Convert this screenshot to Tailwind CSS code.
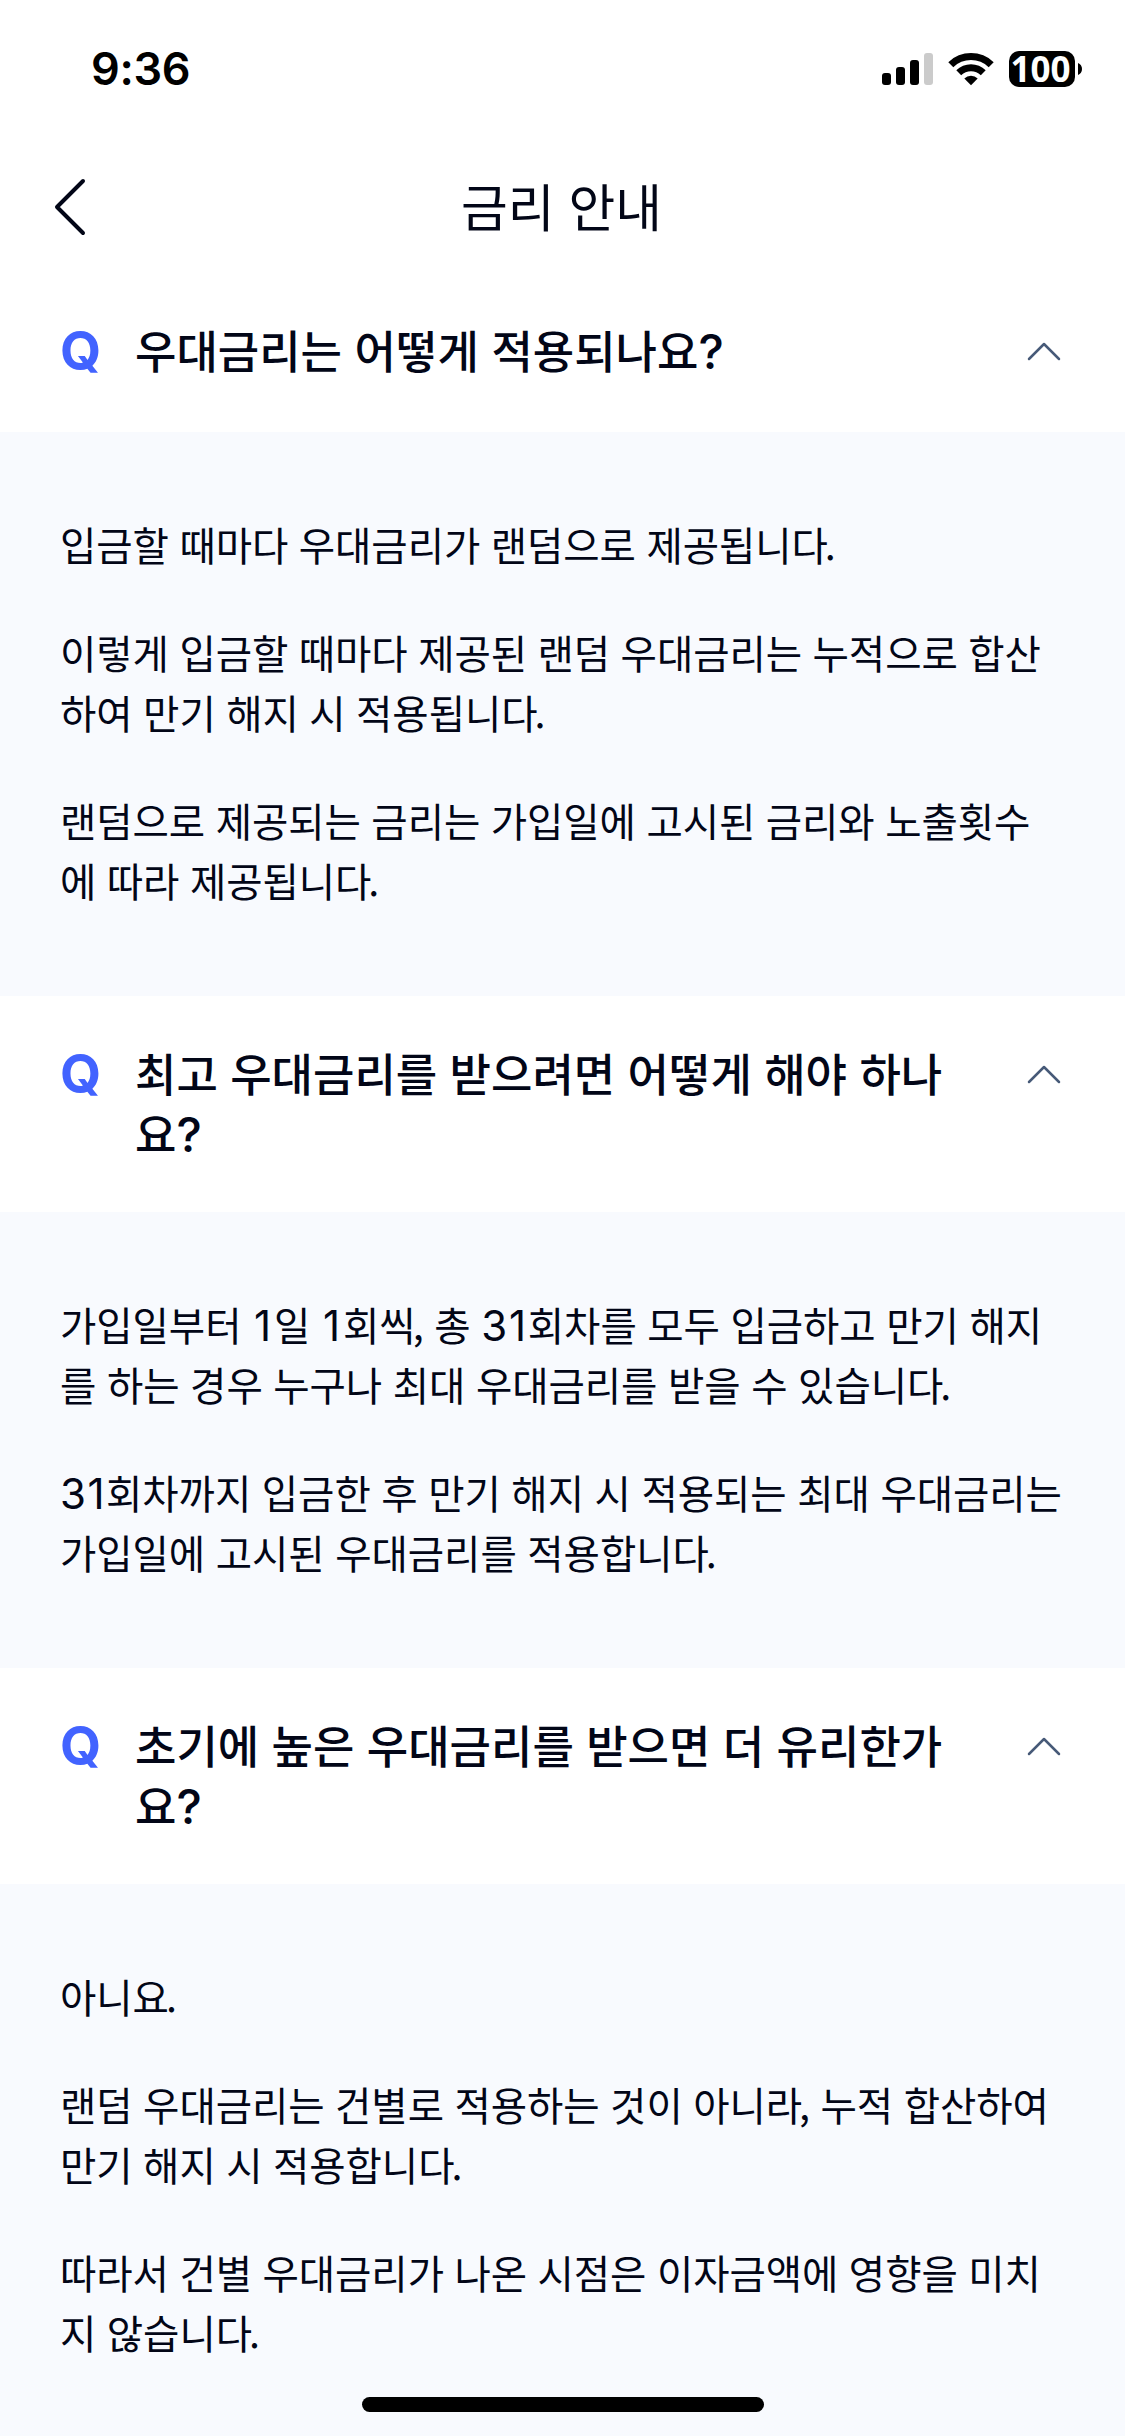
<!DOCTYPE html>
<html lang="ko">
<head>
<meta charset="utf-8">
<title>금리 안내</title>
<script src="https://cdn.jsdelivr.net/npm/@tailwindcss/browser@4"></script>
</head>
<body class="bg-white">
<div class="relative w-[1125px] h-[2436px] overflow-hidden flex flex-col bg-white text-[#020617] font-['Noto_Sans_CJK_KR',sans-serif] whitespace-nowrap">

  <!-- Status bar -->
  <header class="h-[138px] shrink-0 flex justify-between pl-[91px] pr-[43px] text-black">
    <div class="mt-[39px] h-[60px] leading-[60px] text-[45px] tracking-[-0.3px] font-semibold font-['Inter',sans-serif]">9:36</div>
    <svg class="mt-[45px]" width="200" height="48" viewBox="882 45 200 48">
      <rect x="882" y="73" width="9" height="12" rx="3"/>
      <rect x="896" y="67" width="9" height="18" rx="3"/>
      <rect x="910" y="60" width="9" height="25" rx="3"/>
      <rect x="924" y="53" width="9" height="32" rx="3" fill="#cbcbcb"/>
      <path d="M948.3 62.2 A32.5 32.5 0 0 1 993.7 62.2 L988.7 67.2 A25.2 25.2 0 0 0 953.3 67.2 Z"/>
      <path d="M956.3 70.3 A21 21 0 0 1 985.7 70.3 L980.8 75.2 A14 14 0 0 0 961.2 75.2 Z"/>
      <path d="M964.3 78.4 A9.6 9.6 0 0 1 977.7 78.4 L971 85.2 Z"/>
      <rect x="1009" y="51" width="66" height="36" rx="10"/>
      <path d="M1078 63 C1080.500 64 1082 66 1082 69 C1082 72 1080.500 74 1078 75 Z"/>
      <text x="1010.500" y="81.500" textLength="60" fill="#fff" class="text-[35px] font-bold font-['Noto_Sans',sans-serif]">100</text>
    </svg>
  </header>

  <!-- Title bar -->
  <nav class="h-[138px] shrink-0 grid grid-cols-[1fr_auto_1fr] items-center pl-[51px] pr-[53px]">
    <svg width="36" height="60" viewBox="0 0 36 60" fill="none" stroke="#020617" stroke-width="4" stroke-linecap="round" stroke-linejoin="round"><path d="M32 4 L6 30 L32 56"/></svg>
    <h1 class="text-[50.8px] leading-[60px] mb-[4px]">금리 안내</h1>
    <span></span>
  </nav>

  <!-- Question 1 -->
  <section class="h-[156px] shrink-0 flex items-start pt-[45px] pl-[60px] pr-[63px]">
    <span class="w-[75px] leading-[60px] text-[53px] font-bold text-[#4263ff] font-['Inter',sans-serif]">Q</span>
    <h2 class="flex-1 text-[45px] leading-[60px] -mt-px font-medium">우대금리는 어떻게 적용되나요<span class="font-['Inter'] leading-none text-[48px]">?</span></h2>
    <svg class="mt-[17px]" width="36" height="28" viewBox="0 0 36 28" fill="none" stroke="#475a78" stroke-width="2.500" stroke-linecap="round" stroke-linejoin="round"><path d="M3 21 L18 6 L33 21"/></svg>
  </section>
  <section class="h-[564px] shrink-0 bg-[#f8fafe] pt-[82px] px-[60px] flex flex-col gap-[48px] text-[39.5px] leading-[60px] tracking-[-0.05px] [word-spacing:-0.5px]">
    <p>입금할 때마다 우대금리가 랜덤으로 제공됩니다<span class="-ml-[3px]">.</span></p>
    <p>이렇게 입금할 때마다 제공된 랜덤 우대금리는 누적으로 합산<br>하여 만기 해지 시 적용됩니다<span class="-ml-[3px]">.</span></p>
    <p>랜덤으로 제공되는 금리는 가입일에 고시된 금리와 노출횟수<br>에 따라 제공됩니다<span class="-ml-[3px]">.</span></p>
  </section>

  <!-- Question 2 -->
  <section class="h-[216px] shrink-0 flex items-start pt-[48px] pl-[60px] pr-[63px]">
    <span class="w-[75px] leading-[60px] text-[53px] font-bold text-[#4263ff] font-['Inter',sans-serif]">Q</span>
    <h2 class="flex-1 text-[45px] leading-[60px] -mt-px font-medium [word-spacing:-0.2px]">최고 우대금리를 받으려면 어떻게 해야 하나<br>요<span class="font-['Inter'] leading-none text-[48px]">?</span></h2>
    <svg class="mt-[17px]" width="36" height="28" viewBox="0 0 36 28" fill="none" stroke="#475a78" stroke-width="2.500" stroke-linecap="round" stroke-linejoin="round"><path d="M3 21 L18 6 L33 21"/></svg>
  </section>
  <section class="h-[456px] shrink-0 bg-[#f8fafe] pt-[82px] px-[60px] flex flex-col gap-[48px] text-[39.5px] leading-[60px] tracking-[-0.05px] [word-spacing:-0.4px]">
    <p>가입일부터 <span class="font-['Inter'] text-[42px] leading-none pl-[2px] pr-[3px]">1</span>일 <span class="font-['Inter'] text-[42px] leading-none pl-[2px] pr-[3px]">1</span>회씩<span class="-ml-[3px]">,</span> 총 <span class="font-['Inter'] text-[42px] leading-none tracking-[1.8px]">31</span>회차를 모두 입금하고 만기 해지<br>를 하는 경우 누구나 최대 우대금리를 받을 수 있습니다<span class="-ml-[3px]">.</span></p>
    <p><span class="font-['Inter'] text-[42px] leading-none tracking-[1.5px]">31</span>회차까지 입금한 후 만기 해지 시 적용되는 최대 우대금리는<br>가입일에 고시된 우대금리를 적용합니다<span class="-ml-[3px]">.</span></p>
  </section>

  <!-- Question 3 -->
  <section class="h-[216px] shrink-0 flex items-start pt-[48px] pl-[60px] pr-[63px]">
    <span class="w-[75px] leading-[60px] text-[53px] font-bold text-[#4263ff] font-['Inter',sans-serif]">Q</span>
    <h2 class="flex-1 text-[45px] leading-[60px] -mt-px font-medium [word-spacing:-0.2px]">초기에 높은 우대금리를 받으면 더 유리한가<br>요<span class="font-['Inter'] leading-none text-[48px]">?</span></h2>
    <svg class="mt-[17px]" width="36" height="28" viewBox="0 0 36 28" fill="none" stroke="#475a78" stroke-width="2.500" stroke-linecap="round" stroke-linejoin="round"><path d="M3 21 L18 6 L33 21"/></svg>
  </section>
  <section class="grow bg-[#f8fafe] pt-[82px] px-[60px] flex flex-col gap-[48px] text-[39.5px] leading-[60px] tracking-[-0.05px] [word-spacing:-0.5px]">
    <p>아니요<span class="-ml-[3px]">.</span></p>
    <p>랜덤 우대금리는 건별로 적용하는 것이 아니라<span class="-ml-[3px]">,</span> 누적 합산하여<br>만기 해지 시 적용합니다<span class="-ml-[3px]">.</span></p>
    <p>따라서 건별 우대금리가 나온 시점은 이자금액에 영향을 미치<br>지 않습니다<span class="-ml-[3px]">.</span></p>
  </section>

  <!-- Home indicator -->
  <div class="absolute left-[362px] top-[2397px] w-[402px] h-[15px] rounded-full bg-black"></div>
</div>
</body>
</html>
